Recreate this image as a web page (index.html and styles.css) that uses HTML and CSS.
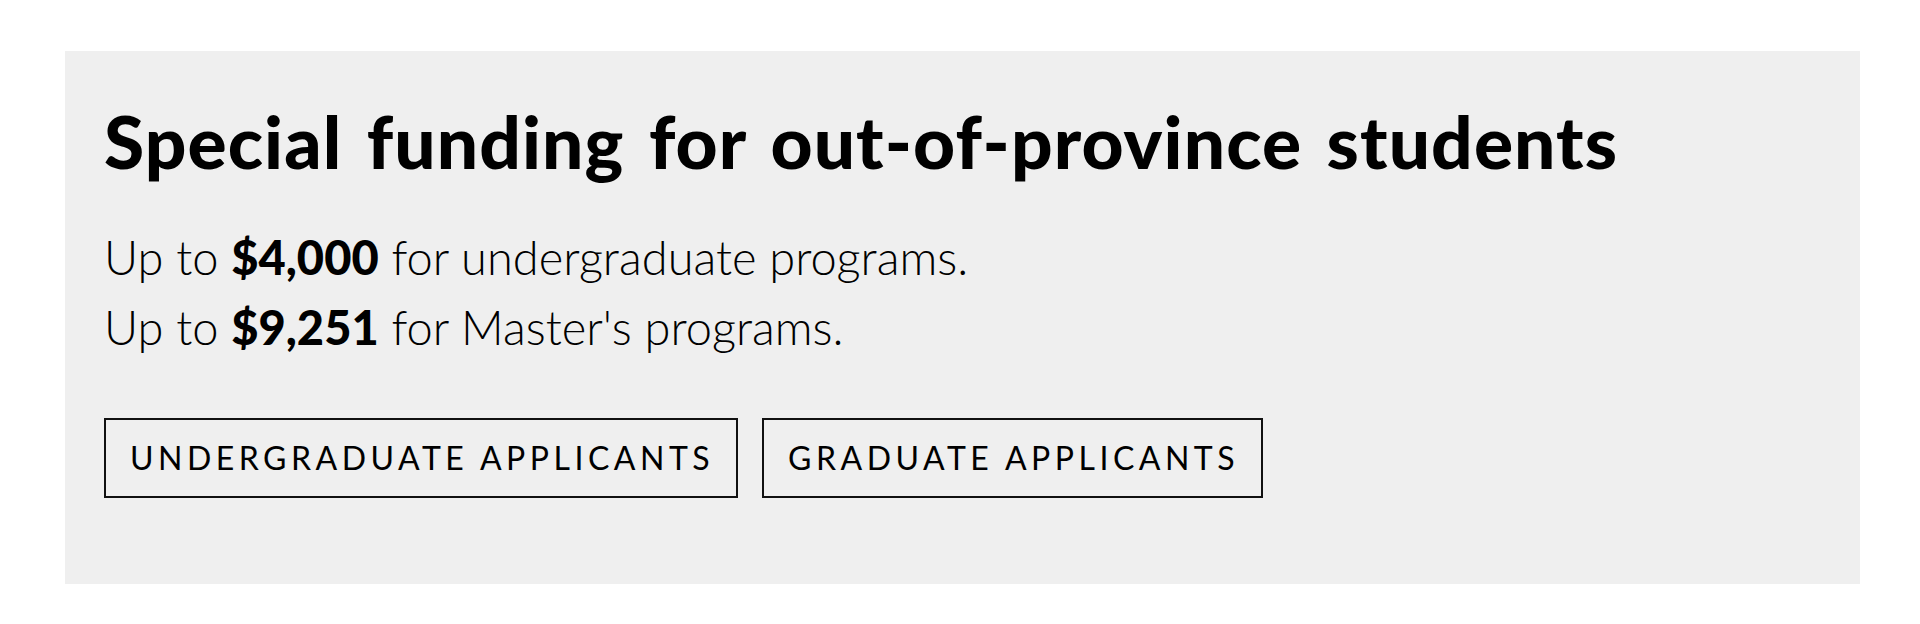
FILE: index.html
```html
<!DOCTYPE html>
<html lang="en">
<head>
    <meta charset="UTF-8">
    <title>Special funding</title>
    <link rel="stylesheet" href="styles.css">
</head>
<body>

<div class="promo">
    <h2 class="promo_title">Special funding for out-of-province students</h2>

    <div class="promo_text">
        <p>Up to <strong>$4,000</strong> for undergraduate programs.</p>
        <p>Up to <strong>$9,251</strong> for Master's programs.</p>
    </div>

    <div class="promo_links">
        <a class="promo_btn" href="#">Undergraduate applicants</a>
        <a class="promo_btn" href="#">Graduate applicants</a>
    </div>
</div>

</body>
</html>
```

FILE: styles.css
```css
* {
    box-sizing: border-box;
    margin: 0;
    padding: 0;
}

body {
    font-family: Lato, "Open Sans", sans-serif;
    color: #000;
    background: #fff;
}

.promo {
    margin: 51px 60px 0 65px;
    height: 533px;
    padding: 47px 39px 0;
    background-color: #efefef;
}

.promo_title {
    font-size: 73px;
    font-weight: 900;
    line-height: 86px;
    letter-spacing: 1.1px;
    word-spacing: 6px;
}

.promo_text {
    margin-top: 38px;
    font-size: 47px;
    font-weight: 300;
    line-height: 70px;
}

.promo_text strong {
    font-weight: 900;
}

.promo_links {
    display: flex;
    gap: 24px;
    margin-top: 56px;
}

.promo_btn {
    display: block;
    height: 80px;
    padding: 0 22px 0 24px;
    border: 2px solid #111;
    color: #000;
    text-decoration: none;
    text-transform: uppercase;
    font-size: 32px;
    line-height: 76px;
    letter-spacing: 4.5px;
}
```
